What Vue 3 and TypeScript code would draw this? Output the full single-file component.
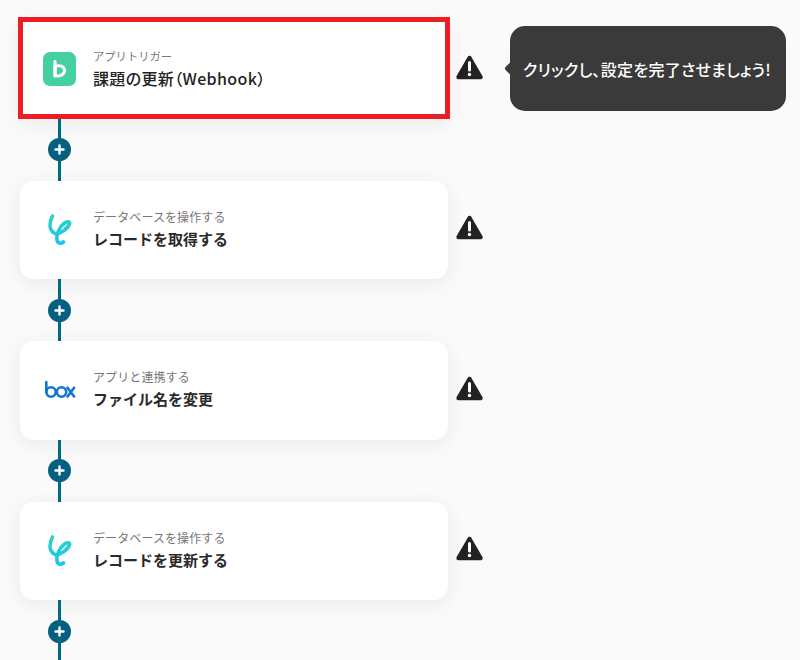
<script setup lang="ts">
interface Step { id: number; label: string; title: string; icon: 'bd' | 'ks' | 'box'; active?: boolean }
const steps: Step[] = [
  { id: 1, label: 'アプリトリガー', title: '課題の更新（Webhook）', icon: 'bd', active: true },
  { id: 2, label: 'データベースを操作する', title: 'レコードを取得する', icon: 'ks' },
  { id: 3, label: 'アプリと連携する', title: 'ファイル名を変更', icon: 'box' },
  { id: 4, label: 'データベースを操作する', title: 'レコードを更新する', icon: 'ks' },
]
</script>

<template>
  <div class="page">
    <div v-for="s in steps" :key="s.id" class="step">
      <div class="row">
        <div class="card" :class="{ active: s.active }">
          <div class="icon">
            <svg v-if="s.icon === 'bd'" width="33" height="34" viewBox="0 0 33 34">
              <rect width="33" height="34" rx="7" fill="#45d0a0" />
              <path d="M12 9.500v14.500" stroke="#fff" stroke-width="3.200" fill="none" stroke-linecap="round" />
              <path d="M12 14.200c5.500-1.600 9.500 .6 9.500 4.200s-4 6.600-9.500 5.200z" stroke="#fff" stroke-width="3" fill="none" stroke-linejoin="round" />
            </svg>
            <svg v-else-if="s.icon === 'ks'" width="34" height="40" viewBox="0 0 34 40">
              <defs>
                <linearGradient :id="'ks' + s.id" x1="0" y1="0" x2="0" y2="1">
                  <stop offset="0" stop-color="#2bd3c0" />
                  <stop offset="1" stop-color="#1cc4f2" />
                </linearGradient>
              </defs>
              <path d="M9.500 6C7 11 5 19 11 23c5 3 14-5 15.500-9 1-2.500-2.500-3-5-1-5.500 4-8.500 12-7.500 17 .5 3.500 4 4 6.500 2" :stroke="'url(#ks' + s.id + ')'" stroke-width="3.600" fill="none" stroke-linecap="round" stroke-linejoin="round" />
            </svg>
            <svg v-else width="34" height="24" viewBox="0 0 34 24">
              <g stroke="#0f75cf" stroke-width="2.600" fill="none" stroke-linecap="round">
                <path d="M3.300 4v10" />
                <circle cx="8" cy="14" r="4.700" />
                <circle cx="18.500" cy="14" r="4.700" />
                <path d="M24.500 9.700l6.600 8.800M31.100 9.700l-6.600 8.800" />
              </g>
            </svg>
          </div>
          <div class="text">
            <div class="label">{{ s.label }}</div>
            <div class="title">{{ s.title }}</div>
          </div>
        </div>
        <svg class="warn" width="27" height="25" viewBox="0 0 27 25">
          <path d="M13.500 3 L24.500 22 H2.500 Z" fill="#222" stroke="#222" stroke-width="4.400" stroke-linejoin="round" />
          <path d="M13.500 7.500v7.500" stroke="#fff" stroke-width="3" stroke-linecap="round" />
          <circle cx="13.500" cy="19.500" r="1.700" fill="#fff" />
        </svg>
        <div v-if="s.active" class="tip">クリックし、設定を完了させましょう!</div>
      </div>
      <div class="link">
        <span class="plus">
          <svg width="11" height="11" viewBox="0 0 11 11">
            <path d="M5.500 1.500v8M1.500 5.500h8" stroke="#fff" stroke-width="2.400" stroke-linecap="round" />
          </svg>
        </span>
      </div>
    </div>
  </div>
</template>

<style>
html, body { margin: 0; background: #fafafa; }
</style>

<style scoped>
.page {
  width: 800px;
  height: 660px;
  overflow: hidden;
  box-sizing: border-box;
  padding-top: 20px;
  background: #fafafa;
  font-family: "Noto Sans CJK JP", "Noto Sans", sans-serif;
}
.row {
  position: relative;
  display: flex;
  align-items: center;
  margin-left: 20px;
}
.card {
  position: relative;
  box-sizing: border-box;
  width: 428px;
  height: 98.500px;
  display: flex;
  align-items: center;
  background: #fff;
  border-radius: 14px;
  box-shadow: 0 4px 20px rgba(0, 0, 0, 0.07);
}
.card.active {
  border-radius: 0;
}
.card.active::after {
  content: "";
  position: absolute;
  left: -2px;
  right: -2px;
  top: -3px;
  bottom: -0.500px;
  border: 5px solid #ee1c25;
}
.icon {
  width: 34px;
  margin-left: 23px;
  margin-right: 16px;
  display: flex;
  justify-content: flex-start;
}
.text {
  padding-bottom: 1px;
}
.label {
  font-size: 12px;
  line-height: 16px;
  letter-spacing: 0.100px;
  color: #777;
}
.active .label {
  font-size: 11.300px;
  letter-spacing: 0;
}
.title {
  margin-top: 3px;
  font-size: 15px;
  line-height: 22px;
  font-weight: 700;
  color: #2a2a2a;
}
.active .title {
  font-size: 16px;
  font-weight: 500;
  letter-spacing: 0.350px;
  color: #222;
  font-feature-settings: "palt";
}
.warn {
  margin-left: 8px;
  margin-bottom: 4px;
  flex: none;
}
.tip {
  position: absolute;
  left: 490px;
  top: 6px;
  width: 276px;
  height: 85px;
  box-sizing: border-box;
  padding-left: 13px;
  display: flex;
  align-items: center;
  background: #3a3a3a;
  color: #fff;
  font-size: 16px;
  font-weight: 500;
  font-feature-settings: "palt";
  letter-spacing: 0.300px;
  border-radius: 15px;
}
.tip::before {
  content: "";
  position: absolute;
  left: -4.500px;
  top: 38px;
  width: 9px;
  height: 9px;
  background: #3a3a3a;
  transform: rotate(45deg);
  border-radius: 2px;
}
.link {
  position: relative;
  width: 3.300px;
  height: 62px;
  margin-left: 57.800px;
  background: #006a86;
}
.plus {
  position: absolute;
  left: -9.800px;
  top: 19.700px;
  width: 23px;
  height: 23px;
  border-radius: 50%;
  background: #05607f;
  display: flex;
  align-items: center;
  justify-content: center;
}
</style>
